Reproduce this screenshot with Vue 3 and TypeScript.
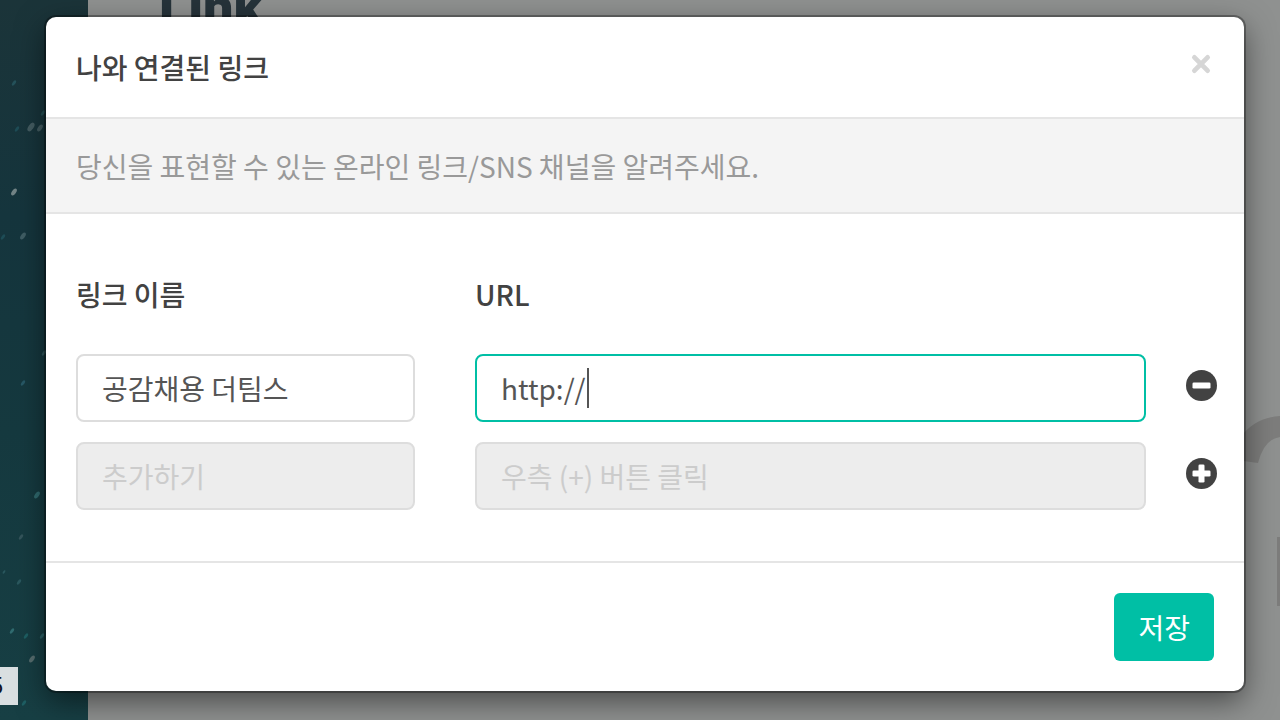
<script setup lang="ts">
import { onMounted, ref } from 'vue'

interface LinkRow {
  name: string
  url: string
}

interface Speck {
  x: number
  y: number
  r: number
  tone: string
}

const link = ref<LinkRow>({ name: '공감채용 더팀스', url: 'http://' })
const urlField = ref<HTMLInputElement | null>(null)

const specks: Speck[] = [
  { x: 14, y: 83, r: 3, tone: '#285a63' },
  { x: 31, y: 127, r: 5, tone: '#4f666b' },
  { x: 40, y: 128, r: 4, tone: '#4f666b' },
  { x: 43, y: 113, r: 3, tone: '#27565b' },
  { x: 17, y: 129, r: 3, tone: '#20525d' },
  { x: 14, y: 192, r: 4, tone: '#8a9899' },
  { x: 23, y: 236, r: 4, tone: '#4a676e' },
  { x: 3, y: 237, r: 3, tone: '#20525d' },
  { x: 44, y: 353, r: 3, tone: '#365e64' },
  { x: 23, y: 383, r: 3, tone: '#2c6070' },
  { x: 37, y: 495, r: 4, tone: '#37777b' },
  { x: 21, y: 537, r: 3, tone: '#3c5b62' },
  { x: 4, y: 572, r: 2, tone: '#2f5f66' },
  { x: 19, y: 582, r: 3, tone: '#2f5f66' },
  { x: 12, y: 631, r: 3, tone: '#37777b' },
  { x: 26, y: 636, r: 3, tone: '#20686c' },
  { x: 42, y: 636, r: 3, tone: '#2f686c' },
  { x: 32, y: 659, r: 4, tone: '#67797a' },
  { x: 24, y: 703, r: 3, tone: '#20686c' },
]

onMounted(() => urlField.value?.focus())
</script>

<template>
  <div class="page">
    <aside class="cover">
      <svg class="stars" aria-hidden="true">
        <ellipse
          v-for="(s, i) in specks"
          :key="i"
          :cx="s.x"
          :cy="s.y"
          :rx="s.r / 2"
          :ry="s.r"
          :fill="s.tone"
          :transform="`rotate(35 ${s.x} ${s.y})`"
        />
      </svg>
      <span class="count">5</span>
    </aside>
    <main class="sheet">
      <h1 class="sheet-title">Link</h1>
      <svg class="mark" viewBox="0 0 40 200" aria-hidden="true">
        <path d="M-4 60L18 63Q24 39 40 37V16Q14 18 0 38Z" fill="#7d7d7c" />
        <rect x="37" y="137" width="3" height="69" fill="#7d7d7c" />
      </svg>
    </main>

    <form class="dialog" role="dialog" aria-labelledby="dialog-title" @submit.prevent>
      <header class="head">
        <h2 id="dialog-title">나와 연결된 링크</h2>
        <button type="button" class="icon-button" aria-label="닫기">
          <svg width="20" height="20" viewBox="0 0 20 20" aria-hidden="true">
            <path d="M3.4 3.4L16.6 16.6M16.6 3.4L3.4 16.6" stroke="#d6d6d6" stroke-width="4.8" stroke-linecap="round" />
          </svg>
        </button>
      </header>
      <p class="intro">당신을 표현할 수 있는 온라인 링크/SNS 채널을 알려주세요.</p>
      <section class="fields">
        <label for="link-name">링크 이름</label>
        <label for="link-url" class="url-cell wide">URL</label>

        <input id="link-name" v-model="link.name" type="text" />
        <div class="url-cell">
          <input id="link-url" ref="urlField" v-model="link.url" type="text" class="active" />
          <span class="caret"></span>
        </div>
        <button type="button" class="icon-button" aria-label="삭제">
          <svg width="32" height="32" viewBox="0 0 32 32" aria-hidden="true">
            <circle cx="15.5" cy="15.5" r="15.5" fill="#424242" />
            <rect x="6.5" y="12.5" width="18" height="6" rx="1.3" fill="#fff" />
          </svg>
        </button>

        <input type="text" placeholder="추가하기" aria-label="링크 이름" disabled />
        <div class="url-cell">
          <input type="text" placeholder="우측 (+) 버튼 클릭" aria-label="URL" disabled />
        </div>
        <button type="button" class="icon-button" aria-label="추가">
          <svg width="32" height="32" viewBox="0 0 32 32" aria-hidden="true">
            <circle cx="15.5" cy="15.5" r="15.5" fill="#424242" />
            <rect x="6.5" y="12.5" width="18" height="6" rx="1.3" fill="#fff" />
            <rect x="12.5" y="6.5" width="6" height="18" rx="1.3" fill="#fff" />
          </svg>
        </button>
      </section>
      <footer class="foot">
        <button type="submit" class="save">저장</button>
      </footer>
    </form>
  </div>
</template>

<style>
body {
  margin: 0;
}
</style>

<style scoped>
.page {
  position: relative;
  display: flex;
  min-height: 100vh;
  overflow: hidden;
  font-family: 'Noto Sans CJK KR', sans-serif;
  font-size: 28px;
  line-height: 40px;
  color: #424242;
}
.page *,
.page {
  box-sizing: border-box;
}
.cover {
  position: relative;
  flex: 0 0 88px;
  background: linear-gradient(#1b3439, #15353d 30%, #15393f 60%, #173f44);
}
.stars {
  position: absolute;
  inset: 0;
  width: 100%;
  height: 100%;
  opacity: 0.8;
}
.count {
  position: absolute;
  left: 0;
  bottom: 15px;
  display: flex;
  justify-content: flex-end;
  width: 18px;
  height: 38px;
  padding-right: 15px;
  overflow: hidden;
  background: #d9dfe1;
  color: #10131c;
  font-family: 'Liberation Sans', sans-serif;
  font-size: 23px;
  line-height: 38px;
}
.sheet {
  position: relative;
  flex: 1;
  background: #8f9190;
}
.sheet-title {
  position: absolute;
  left: 71px;
  top: -24px;
  margin: 0;
  font-family: Roboto, 'Liberation Sans', sans-serif;
  font-size: 54px;
  line-height: 64px;
  font-weight: 900;
  color: #26333a;
}
.mark {
  position: absolute;
  right: 0;
  top: 400px;
  width: 40px;
  height: 200px;
  overflow: visible;
}
.dialog {
  position: absolute;
  top: 17px;
  left: 46px;
  right: 36px;
  background: #fff;
  border-radius: 10px;
  box-shadow: 0 0 0 2px rgba(0, 0, 0, 0.3), 0 10px 30px rgba(0, 0, 0, 0.5);
}
.head {
  display: flex;
  justify-content: space-between;
  align-items: flex-start;
  padding: 30px 30px 29px;
  border-bottom: 2px solid #e5e5e5;
}
h2 {
  margin: 0;
  font-size: 28px;
  line-height: 41px;
  font-weight: 500;
}
.icon-button {
  display: flex;
  margin: 0;
  padding: 0;
  border: 0;
  background: none;
}
.head .icon-button {
  padding: 7px 3px;
}
.intro {
  margin: 0;
  padding: 27px 30px 26px;
  border-bottom: 2px solid #e5e5e5;
  background: #f4f4f4;
  color: #999;
}
.fields {
  display: grid;
  grid-template-columns: 339px 1fr 32px;
  gap: 20px 40px;
  align-items: center;
  padding: 60px 26px 51px 30px;
  border-bottom: 2px solid #e5e5e5;
}
.fields label {
  margin-bottom: 20px;
  font-weight: 500;
}
.url-cell {
  position: relative;
  margin-left: 20px;
}
.fields .wide {
  grid-column: 2 / 4;
}
.fields .icon-button {
  margin-bottom: 4px;
}
input {
  display: block;
  width: 100%;
  height: 68px;
  padding: 0 24px;
  border: 2px solid #ddd;
  border-radius: 8px;
  outline: 0;
  background: #fff;
  color: #555;
  font: inherit;
  caret-color: transparent;
}
input.active {
  border-color: #00bfa5;
}
input:disabled {
  background: #ededed;
}
input::placeholder {
  color: #ccc;
  opacity: 1;
}
.caret {
  position: absolute;
  left: 112px;
  top: 14px;
  width: 2px;
  height: 40px;
  background: #555;
}
.foot {
  display: flex;
  justify-content: flex-end;
  padding: 30px;
}
.save {
  height: 68px;
  padding: 0 24px;
  border: 0;
  border-radius: 6px;
  background: #00bfa5;
  color: #fff;
  font: inherit;
}
</style>
